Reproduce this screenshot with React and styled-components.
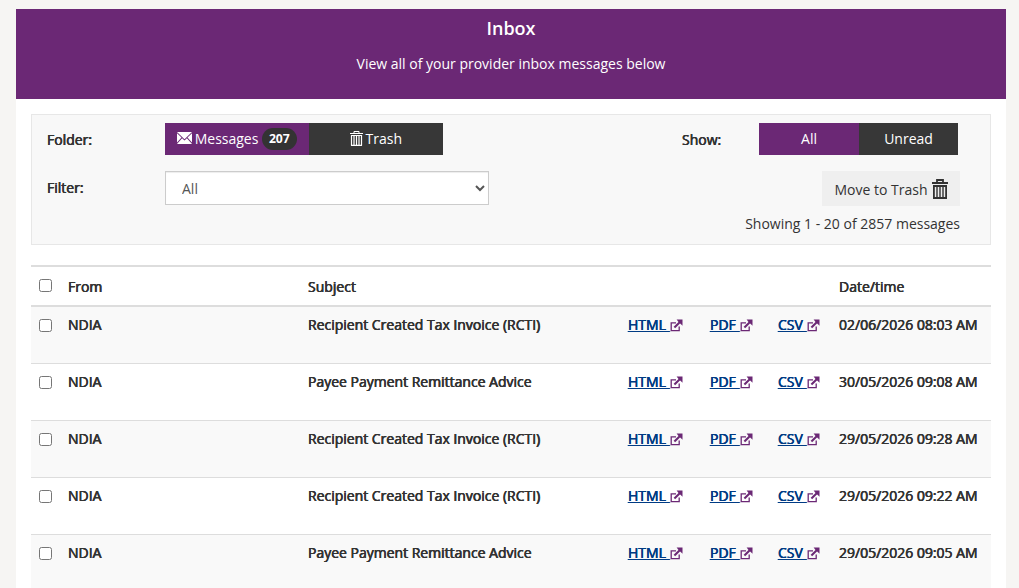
import React from "react";
import styled, { createGlobalStyle } from "styled-components";

const messages = [
  { id: 1, subject: "Recipient Created Tax Invoice (RCTI)", date: "02/06/2026 08:03 AM" },
  { id: 2, subject: "Payee Payment Remittance Advice", date: "30/05/2026 09:08 AM" },
  { id: 3, subject: "Recipient Created Tax Invoice (RCTI)", date: "29/05/2026 09:28 AM" },
  { id: 4, subject: "Recipient Created Tax Invoice (RCTI)", date: "29/05/2026 09:22 AM" },
  { id: 5, subject: "Payee Payment Remittance Advice", date: "29/05/2026 09:05 AM" },
];

function EnvelopeIcon() {
  return (
    <svg width="15" height="12" viewBox="0 0 15 12" fill="#fff">
      <path d="M0 0h15L7.5 7.2z" />
      <path d="M0 1.2l4.5 4.4L0 10.4zM15 1.2v9.2l-4.5-4.8z" />
      <path d="M0 12l5.1-5.7 2.4 2.2 2.4-2.2L15 12z" />
    </svg>
  );
}

// small one sits in the Trash tab
function SmallTrashIcon() {
  return (
    <svg width="13" height="15" viewBox="0 0 13 15" fill="none" stroke="currentColor">
      <path d="M4 2V.5h5V2" />
      <path d="M0 2.5h13" />
      <path d="M1 4.5h11M1 14.3h11" strokeWidth="1.2" />
      <path d="M1.5 4v10.5M4 4v10.5M6.5 4v10.5M9 4v10.5M11.5 4v10.5" strokeWidth="1.2" />
    </svg>
  );
}

function TrashIcon() {
  return (
    <svg width="16" height="20" viewBox="0 0 16 20" fill="none" stroke="currentColor">
      <path d="M5 3V1h6v2" strokeWidth="1.8" />
      <path d="M0 4h16" strokeWidth="2" />
      <path d="M1 7h14M1 19h14" strokeWidth="2" />
      <path d="M1.9 6v14M14.1 6v14" strokeWidth="1.8" />
      <path d="M5 7v12M8 7v12M11 7v12" strokeWidth="1.4" />
    </svg>
  );
}

function ExternalIcon() {
  return (
    <svg width="13" height="13" viewBox="0 0 13 13" fill="none" stroke="#6b2875">
      <path d="M6 3.8H1.2v7.9h8V7.5" strokeWidth="1.3" />
      <path d="M4.4 8.6L10 3" strokeWidth="2.1" />
      <path d="M6.6.5H12.5v6.2l-1.8-1.6-2.6-2.6z" fill="#6b2875" stroke="none" />
    </svg>
  );
}

function FileLink({ children }) {
  return (
    <Link href="#">
      {children} <ExternalIcon />
    </Link>
  );
}

export default function App() {
  return (
    <>
      <GlobalStyle />
      <Page>
        <Banner>
          <Title>Inbox</Title>
          <Intro>View all of your provider inbox messages below</Intro>
        </Banner>
        <Panel>
          <LeftSide>
            <PanelRow>
              <Label>Folder:</Label>
              <Tab $active $width={144}>
                <EnvelopeIcon />
                <TabText>Messages</TabText>
                <Badge>207</Badge>
              </Tab>
              <Tab $width={134}>
                <SmallTrashIcon />
                <TabText>Trash</TabText>
              </Tab>
            </PanelRow>
            <PanelRow>
              <FilterLabel>Filter:</FilterLabel>
              <Select defaultValue="All">
                <option>All</option>
              </Select>
            </PanelRow>
          </LeftSide>
          <RightSide>
            <ShowRow>
              <Label>Show:</Label>
              <Tab $active $width={100}>All</Tab>
              <Tab $width={99}>Unread</Tab>
            </ShowRow>
            <MoveButton>
              Move to Trash
              <TrashIcon />
            </MoveButton>
            <Count>Showing 1 - 20 of 2857 messages</Count>
          </RightSide>
        </Panel>
        <Table>
          <colgroup>
            <col width="29" />
            <col width="240" />
            <col width="320" />
            <col width="82" />
            <col width="68" />
            <col width="61" />
            <col width="160" />
          </colgroup>
          <thead>
            <tr>
              <HeadCell><Checkbox /></HeadCell>
              <HeadCell>From</HeadCell>
              <HeadCell colSpan={4}>Subject</HeadCell>
              <HeadCell>Date/time</HeadCell>
            </tr>
          </thead>
          <tbody>
            {messages.map((message) => (
              <Row key={message.id}>
                <Cell><Checkbox /></Cell>
                <Cell>NDIA</Cell>
                <Cell>{message.subject}</Cell>
                <Cell><FileLink>HTML</FileLink></Cell>
                <Cell><FileLink>PDF</FileLink></Cell>
                <Cell><FileLink>CSV</FileLink></Cell>
                <Cell>{message.date}</Cell>
              </Row>
            ))}
          </tbody>
        </Table>
      </Page>
    </>
  );
}

const GlobalStyle = createGlobalStyle`
  * {
    box-sizing: border-box;
  }
  body {
    margin: 0;
    background: #f6f5f3;
    color: #333;
    font-family: "Open Sans", sans-serif;
    font-size: 14px;
    line-height: 20px;
  }
  #root {
    display: flow-root;
  }
`;

const Page = styled.main`
  width: 990px;
  height: 579px;
  margin: 9px 0 0 16px;
  overflow: hidden;
  background: #fff;
`;

const Banner = styled.header`
  height: 90px;
  padding-top: 9px;
  background: #6b2875;
  color: #fff;
  text-align: center;
`;

const Title = styled.h1`
  margin: 0;
  font-size: 18px;
  font-weight: 600;
  line-height: 20px;
`;

const Intro = styled.p`
  margin: 16px 0 0;
`;

const Panel = styled.section`
  display: flex;
  justify-content: space-between;
  height: 131px;
  margin: 15px 15px 20px;
  padding: 8px 30px 0 15px;
  background: #f8f8f8;
  border: 1px solid #e7e7e7;
`;

const LeftSide = styled.div`
  display: flex;
  flex-direction: column;
  gap: 16px;
`;

const RightSide = styled.div`
  display: flex;
  flex-direction: column;
  align-items: flex-end;
`;

const PanelRow = styled.div`
  display: flex;
  align-items: center;
`;

const ShowRow = styled(PanelRow)`
  width: 278px;
  margin-bottom: 16px;

  & > span {
    width: 77px;
  }
`;

// slightly thickened regular weight
const Label = styled.span`
  width: 118px;
  padding-top: 2px;
  text-shadow: 0.3px 0 currentColor, -0.3px 0 currentColor;
`;

const FilterLabel = styled(Label)`
  padding-top: 0;
`;

const Tab = styled.button`
  display: flex;
  align-items: center;
  justify-content: center;
  width: ${(props) => props.$width}px;
  height: 32px;
  padding: 0;
  border: 0;
  background: ${(props) => (props.$active ? "#6b2875" : "#373737")};
  color: #fff;
  font: inherit;

  svg {
    margin-bottom: 2px;
  }
`;

const TabText = styled.span`
  margin-left: 2.5px;
`;

const Badge = styled.span`
  height: 22px;
  margin-left: 3.5px;
  padding: 0 7px;
  border-radius: 11px;
  background: #333;
  font-size: 12.2px;
  font-weight: 700;
  line-height: 22px;
`;

const Select = styled.select`
  width: 324px;
  height: 34px;
  padding: 0 0 0 12px;
  border: 1px solid #ccc;
  border-radius: 0;
  background: #fff;
  box-shadow: inset 0 1px 1px rgba(0, 0, 0, 0.075);
  color: #555;
  font: inherit;
`;

const MoveButton = styled.button`
  display: flex;
  align-items: center;
  gap: 4px;
  width: 138px;
  height: 35px;
  padding: 2px 0 0 12.5px;
  border: 0;
  background: #efefef;
  color: #333;
  font: inherit;

  svg {
    margin-bottom: 2px;
  }
`;

const Count = styled.div`
  margin-top: 8px;
`;

const Table = styled.table`
  width: 960px;
  margin: 0 15px;
  table-layout: fixed;
  border-collapse: separate;
  border-spacing: 0;
  border-top: 2px solid #ddd;
`;

const HeadCell = styled.th`
  height: 40px;
  padding: 10px 0 8px 8px;
  border-bottom: 2px solid #ddd;
  font-weight: 400;
  text-align: left;
  vertical-align: top;
  text-shadow: 0.3px 0 currentColor, -0.3px 0 currentColor;
`;

const Row = styled.tr`
  background: #fff;

  &:nth-child(odd) {
    background: #f9f9f9;
  }
`;

const Cell = styled.td`
  height: 57px;
  padding: 8px 0 0 8px;
  border-bottom: 1px solid #ddd;
  vertical-align: top;
  white-space: nowrap;
  letter-spacing: -0.01px;
  text-shadow: 0.3px 0 currentColor, -0.3px 0 currentColor;
`;

const Checkbox = styled.input.attrs({ type: "checkbox" })`
  display: block;
  width: 13px;
  height: 13px;
  margin: 4px 0 0;

  th & {
    margin-top: 2px;
  }
`;

const Link = styled.a`
  color: #003b84;
  text-decoration: underline;

  svg {
    margin-left: 0.6px;
    vertical-align: -2px;
  }
`;
